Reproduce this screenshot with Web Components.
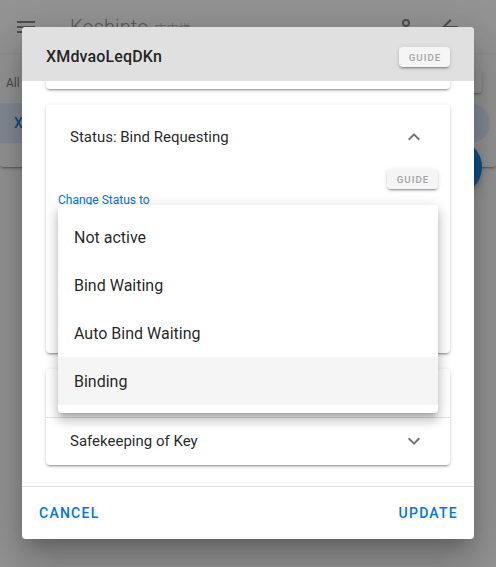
<!DOCTYPE html>
<html lang="en">
<head>
<meta charset="utf-8">
<title>Koshinto</title>
<style>
html,body{margin:0;height:100%;overflow:hidden}
body{font-family:Roboto,"Noto Sans CJK JP",sans-serif;color:rgba(0,0,0,.87);background:#f5f5f5}
</style>
</head>
<body>
<koshinto-app></koshinto-app>
<script>
const define=(name,html)=>customElements.define(name,class extends HTMLElement{
  constructor(){super();this.attachShadow({mode:'open'}).innerHTML=html;}
});
const elevation='0 3px 1px -2px rgba(0,0,0,.2),0 2px 2px 0 rgba(0,0,0,.14),0 1px 5px 0 rgba(0,0,0,.12)';

define('guide-button',`<style>
:host{display:flex;box-sizing:border-box;width:51px;height:20px;padding-left:1px;padding-top:1px;align-items:center;justify-content:center;background:#f5f5f5;border-radius:4px;box-shadow:${elevation};color:#a3a3a3;font-size:9.7px;font-weight:500;letter-spacing:1.05px}
</style><slot></slot>`);

define('chevron-icon',`<style>:host{display:block;width:24px;height:24px}:host([up]) svg{transform:rotate(180deg)}svg{display:block}</style>
<svg width="24" height="24" viewBox="0 0 24 24"><path fill="#757575" d="M7.41 8.58 12 13.17l4.59-4.59L18 10l-6 6-6-6z"/></svg>`);

define('expansion-panel',`<style>
:host{display:block;box-sizing:border-box;background:#fff;border-radius:4px;box-shadow:${elevation};margin-bottom:16px;flex:none}
</style><slot></slot>`);

define('panel-header',`<style>
:host{display:flex;align-items:center;justify-content:space-between;box-sizing:border-box;height:48px;padding:0 24px;font-size:15px;line-height:15px}
:host([active]){height:64px}
</style><slot></slot><slot name="icon"></slot>`);

define('text-button',`<style>
:host{display:block;color:#0075e2;font-size:14px;font-weight:500;letter-spacing:1.25px;line-height:20px}
</style><slot></slot>`);

define('menu-item',`<style>
:host{display:flex;height:48px;align-items:center;padding:0 16px;font-size:16px}
:host([selected]){background:#f5f5f5}
</style><slot></slot>`);

define('select-menu',`<style>
:host{display:block;box-sizing:border-box;position:absolute;left:58px;top:205px;width:380px;height:208px;padding:8px 0;background:#fff;border-radius:4px;box-shadow:0 5px 5px -3px rgba(0,0,0,.2),0 8px 10px 1px rgba(0,0,0,.14),0 3px 14px 2px rgba(0,0,0,.12)}
</style><menu-item>Not active</menu-item><menu-item>Bind Waiting</menu-item><menu-item>Auto Bind Waiting</menu-item><menu-item selected>Binding</menu-item>`);

define('device-page',`<style>
:host{display:flex;flex-direction:column;height:567px;background:#f5f5f5}
header{display:flex;height:54px;margin-bottom:1px;box-sizing:border-box;padding:0 34px 0 14px;align-items:center;flex:none;color:#8a8a8a}
svg{display:block;flex:none}
h1{display:flex;align-items:baseline;gap:6px;font-weight:300;font-size:20px;letter-spacing:.1px;margin:2px auto 0 32px;line-height:32px}
small{font-size:12px;letter-spacing:0}
.key{margin-right:20px}
section{position:relative;display:flex;flex-direction:column;box-sizing:border-box;height:112px;padding-top:15px;background:#f5f5f5;border-radius:4px;box-shadow:${elevation}}
.tools{display:flex;justify-content:space-between;height:33px;flex:none;padding:0 14px 0 6px;box-sizing:border-box;font-size:12px;color:rgba(0,0,0,.6)}
.tools span{line-height:27px}
.tools i{width:30px;height:23px;border-radius:4px;background:#f0f0f0;box-shadow:${elevation}}
.row{height:40px;box-sizing:border-box;margin-right:6px;border-radius:0 20px 20px 0;background:#d7e5f7;color:#0075e2;padding-left:14px;font-size:14px;font-weight:500;line-height:40px}
.fab{position:absolute;right:14px;top:84px;width:56px;height:56px;border-radius:50%;background:#0075e2;box-shadow:0 3px 5px -1px rgba(0,0,0,.2),0 6px 10px rgba(0,0,0,.14)}
</style>
<header><svg width="24" height="24" viewBox="0 0 24 24"><path fill="#757575" d="M3 6h18v2H3zM3 11h18v2H3zM3 16h18v2H3z"/></svg>
<h1><span>Koshinto</span><small>店内様</small></h1>
<svg class="key" width="24" height="24" viewBox="0 0 24 24"><g fill="none" stroke="#757575" stroke-width="2"><circle cx="12" cy="8" r="3"/><path d="M12 12v9"/></g></svg>
<svg width="24" height="24" viewBox="0 0 24 24"><path fill="#757575" d="M20 11v2H8l5.5 5.5-1.42 1.42L4.16 12l7.92-7.92L13.5 5.500 8 11z"/></svg></header>
<section><div class="tools"><span>All</span><i></i></div><div class="row">XMdvaoLeqDKn</div><div class="fab"></div></section>`);

define('edit-dialog',`<style>
:host{display:flex;flex-direction:column;position:absolute;left:22px;top:27px;width:452px;height:512px;background:#fff;border-radius:4px;overflow:hidden;box-shadow:0 11px 15px -7px rgba(0,0,0,.2),0 24px 38px 3px rgba(0,0,0,.14),0 9px 46px 8px rgba(0,0,0,.12)}
header{height:54px;display:flex;flex:none;align-items:center;justify-content:space-between;padding:0 24px;box-sizing:border-box;background:#e0e0e0}
header guide-button{margin-top:6px;align-self:center}
h2{margin:6px 0 0;font-size:16px;letter-spacing:.15px;font-weight:500;line-height:24px}
main{height:405px;flex:none;padding:0 24px;box-sizing:border-box;overflow:hidden}
.previous{height:48px;margin-top:-40px}
.status{height:248px}
.details{display:flex;flex-direction:column;padding:0 12px}
.details guide-button{align-self:flex-end}
label{font-size:12px;line-height:16px;color:#0075e2;margin-top:3px}
.keys{height:96px}
.keys panel-header + panel-header{border-top:1px solid #e0e0e0}
.keys chevron-icon{margin-top:-1px}
footer{display:flex;box-sizing:border-box;flex:1;align-items:center;justify-content:space-between;border-top:1px solid #e0e0e0;padding:0 16px 0 17px}
</style>
<header><h2>XMdvaoLeqDKn</h2><guide-button>GUIDE</guide-button></header>
<main>
<expansion-panel class="previous"></expansion-panel>
<expansion-panel class="status"><panel-header active>Status: Bind Requesting<chevron-icon up slot="icon"></chevron-icon></panel-header><div class="details"><guide-button>GUIDE</guide-button><label>Change Status to</label></div></expansion-panel>
<expansion-panel class="keys"><panel-header></panel-header><panel-header>Safekeeping of Key<chevron-icon slot="icon"></chevron-icon></panel-header></expansion-panel>
</main>
<footer><text-button>CANCEL</text-button><text-button>UPDATE</text-button></footer>`);

define('koshinto-app',`<style>
:host{display:block;position:relative;height:567px;overflow:hidden}
.scrim{position:absolute;inset:0;background:#212121;opacity:.46}
</style><device-page></device-page><div class="scrim"></div><edit-dialog></edit-dialog><select-menu></select-menu>`);
</script>
</body>
</html>
